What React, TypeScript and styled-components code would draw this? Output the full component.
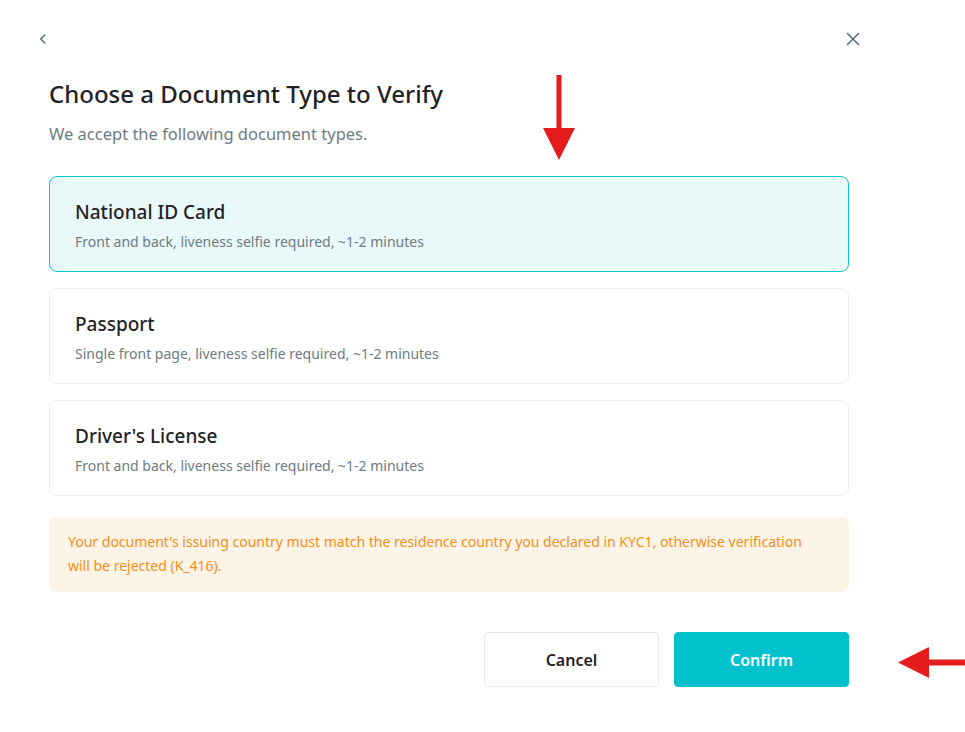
import React, { useState } from "react";
import styled, { createGlobalStyle } from "styled-components";

const GlobalStyle = createGlobalStyle`
  html, body {
    margin: 0;
    padding: 0;
    background: #ffffff;
  }
  body {
    font-family: "Noto Sans", "Open Sans", Arial, sans-serif;
    color: #1f2326;
  }
`;

const Page = styled.div`
  position: relative;
  width: 965px;
  height: 732px;
  overflow: hidden;
  background: #ffffff;
`;

const Dialog = styled.div`
  width: 800px;
  padding: 28px 0 0 49px;
  display: flex;
  flex-direction: column;
`;

const TopBar = styled.div`
  display: flex;
  justify-content: space-between;
  align-items: center;
  margin-left: -17px;
  margin-right: -15px;
  height: 22px;
`;

const IconButton = styled.button`
  width: 22px;
  height: 22px;
  padding: 0;
  border: none;
  background: transparent;
  display: flex;
  align-items: center;
  justify-content: center;
  color: #5f6f78;
  cursor: pointer;
`;

const Title = styled.h1`
  margin: 27px 0 0;
  font-size: 24px;
  line-height: 34px;
  font-weight: 500;
  color: #1f2326;
`;

const Subtitle = styled.p`
  margin: 11px 0 0;
  font-size: 16.5px;
  line-height: 24px;
  color: #6e7b82;
`;

const OptionList = styled.div`
  margin-top: 30px;
  display: flex;
  flex-direction: column;
  gap: 16px;
`;

const Option = styled.button<{ $active: boolean }>`
  box-sizing: border-box;
  width: 800px;
  height: 96px;
  padding: 22px 25px 0;
  display: flex;
  flex-direction: column;
  justify-content: flex-start;
  align-items: flex-start;
  gap: 7px;
  border-radius: 8px;
  text-align: left;
  font-family: inherit;
  cursor: pointer;
  border: 1px solid ${(p) => (p.$active ? "#12c2cc" : "#ebedee")};
  background: ${(p) => (p.$active ? "#e9f9fa" : "#ffffff")};
`;

const OptionTitle = styled.span`
  font-size: 19px;
  line-height: 26px;
  font-weight: 500;
  color: #1f2326;
`;

const OptionDesc = styled.span`
  font-size: 14px;
  line-height: 20px;
  color: #6e7b82;
`;

const Notice = styled.div`
  box-sizing: border-box;
  margin-top: 21px;
  width: 800px;
  padding: 13px 40px 14px 19px;
  border-radius: 8px;
  background: #fdf3e7;
  color: #f2901a;
  font-size: 14px;
  line-height: 24px;
`;

const Actions = styled.div`
  margin-top: 40px;
  display: flex;
  justify-content: flex-end;
  gap: 15px;
`;

const ActionButton = styled.button<{ $primary?: boolean }>`
  box-sizing: border-box;
  width: 175px;
  height: 55px;
  border-radius: 4px;
  font-family: inherit;
  font-size: 16px;
  font-weight: 600;
  cursor: pointer;
  border: 1px solid ${(p) => (p.$primary ? "#00c1cc" : "#e8eaeb")};
  background: ${(p) => (p.$primary ? "#00c1cc" : "#ffffff")};
  color: ${(p) => (p.$primary ? "#ffffff" : "#1f2326")};
`;

/* Red callout arrows drawn over the dialog */
const Callout = styled.svg<{ $left: number; $top: number }>`
  position: absolute;
  left: ${(p) => p.$left}px;
  top: ${(p) => p.$top}px;
  pointer-events: none;
`;

const ChevronLeft = () => (
  <svg width="12" height="12" viewBox="0 0 12 12" fill="none">
    <path d="M7.8 2L3.8 6L7.8 10" stroke="currentColor" strokeWidth="1.6" strokeLinecap="round" strokeLinejoin="round" />
  </svg>
);

const CloseIcon = () => (
  <svg width="14" height="14" viewBox="0 0 14 14" fill="none">
    <path d="M1.5 1.5L12.5 12.5M12.5 1.5L1.5 12.5" stroke="currentColor" strokeWidth="1.6" strokeLinecap="round" />
  </svg>
);

const documents = [
  { id: "id", title: "National ID Card", desc: "Front and back, liveness selfie required, ~1-2 minutes" },
  { id: "passport", title: "Passport", desc: "Single front page, liveness selfie required, ~1-2 minutes" },
  { id: "license", title: "Driver's License", desc: "Front and back, liveness selfie required, ~1-2 minutes" },
];

export default function App() {
  const [selected, setSelected] = useState("id");

  return (
    <Page>
      <GlobalStyle />
      <Dialog>
        <TopBar>
          <IconButton aria-label="Back">
            <ChevronLeft />
          </IconButton>
          <IconButton aria-label="Close">
            <CloseIcon />
          </IconButton>
        </TopBar>
        <Title>Choose a Document Type to Verify</Title>
        <Subtitle>We accept the following document types.</Subtitle>
        <OptionList>
          {documents.map((d) => (
            <Option key={d.id} $active={selected === d.id} onClick={() => setSelected(d.id)}>
              <OptionTitle>{d.title}</OptionTitle>
              <OptionDesc>{d.desc}</OptionDesc>
            </Option>
          ))}
        </OptionList>
        <Notice>
          Your document's issuing country must match the residence country you declared in KYC1, otherwise verification
          will be rejected (K_416).
        </Notice>
        <Actions>
          <ActionButton>Cancel</ActionButton>
          <ActionButton $primary>Confirm</ActionButton>
        </Actions>
      </Dialog>

      <Callout $left={542} $top={75} width="34" height="86" viewBox="0 0 34 86">
        <rect x="14.5" y="0" width="5" height="55" fill="#e41c1c" />
        <polygon points="1,53 33,53 17,85" fill="#e41c1c" />
      </Callout>
      <Callout $left={897} $top={646} width="68" height="33" viewBox="0 0 68 33">
        <rect x="30" y="13.5" width="38" height="6" fill="#e41c1c" />
        <polygon points="1,16.5 32,1 32,32" fill="#e41c1c" />
      </Callout>
    </Page>
  );
}
